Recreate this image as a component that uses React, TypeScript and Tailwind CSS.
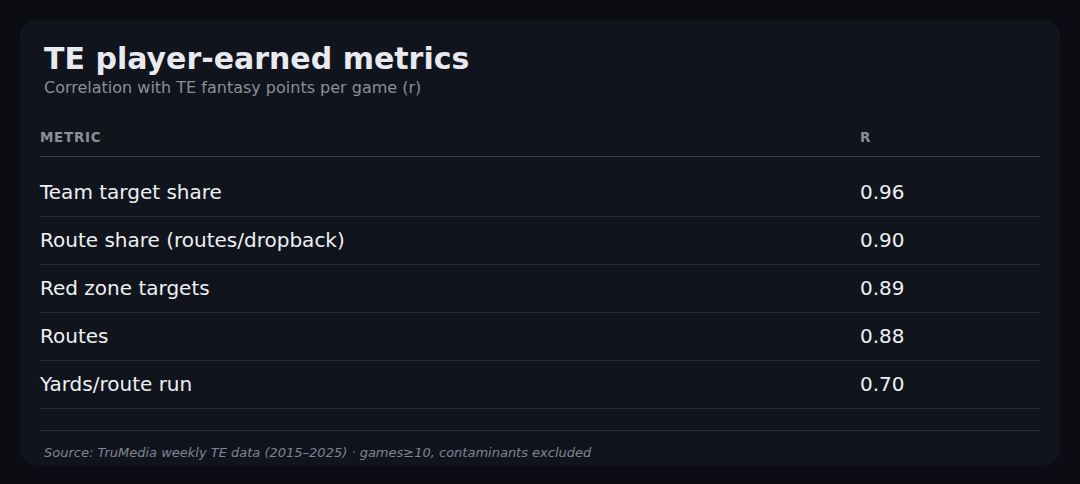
import React from 'react';

const rows = [
  { metric: 'Team target share', r: '0.96' },
  { metric: 'Route share (routes/dropback)', r: '0.90' },
  { metric: 'Red zone targets', r: '0.89' },
  { metric: 'Routes', r: '0.88' },
  { metric: 'Yards/route run', r: '0.70' },
];

export default function App() {
  return (
    <div className="min-h-[484px] w-full bg-[#0b0d13] p-5 font-['DejaVu_Sans',sans-serif]">
      <div className="rounded-2xl bg-[#11141c] px-5 pt-5 pb-1">
        {/* Title */}
        <div className="px-1">
          <h1 className="text-[30px] leading-[38px] font-bold text-[#e8eaef]">TE player-earned metrics</h1>
          <p className="text-[16px] leading-5 text-[#8a8f9b]">Correlation with TE fantasy points per game (r)</p>
        </div>

        {/* Table */}
        <div className="mt-[18px]">
          <div className="flex border-b border-[#3a3e4a] pt-[13px] pb-[11px] text-[13.5px] leading-4 font-bold uppercase tracking-[0.05em] text-[#8a8f9b]">
            <div className="w-[820px]">Metric</div>
            <div className="flex-1">R</div>
          </div>
          <div className="mt-3">
            {rows.map((row) => (
              <div key={row.metric} className="flex h-12 items-center border-b border-[#262a34] pb-px text-[20px] leading-7 text-[#eef0f4]">
                <div className="w-[820px]">{row.metric}</div>
                <div className="flex-1">{row.r}</div>
              </div>
            ))}
          </div>
        </div>

        {/* Footer */}
        <div className="mt-[21px] border-t border-[#292d37] px-1 pt-[14px] text-[13px] leading-4 italic text-[#7f8494]">
          Source: TruMedia weekly TE data (2015–2025) · games≥10, contaminants excluded
        </div>
      </div>
    </div>
  );
}
